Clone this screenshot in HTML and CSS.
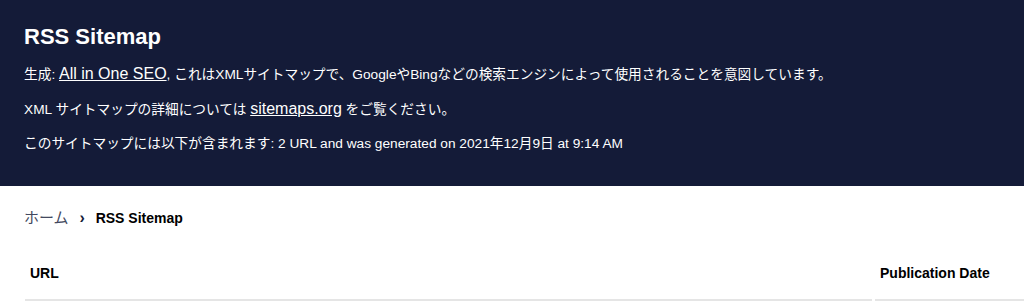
FILE: index.html
```html
<!DOCTYPE html>
<html lang="ja">
  <head>
    <meta charset="UTF-8" />
    <meta name="viewport" content="width=device-width, initial-scale=1.0" />
    <title>RSS Sitemap</title>
    <link rel="stylesheet" href="styles.css">
  </head>
  <body>
    <div id="header">
      <h1 class="title">RSS Sitemap</h1>
      <p class="desc">生成: <a href="#">All in One SEO</a>, これはXMLサイトマップで、GoogleやBingなどの検索エンジンによって使用されることを意図しています。</p>
      <p class="desc">XML サイトマップの詳細については <a href="#">sitemaps.org</a> をご覧ください。</p>
      <p class="desc">このサイトマップには以下が含まれます: 2 URL and was generated on 2021年12月9日 at 9:14 AM</p>
    </div>
    <div id="content">
      <div class="breadcrumb">
        <span class="home">ホーム</span>
        <span class="sep">&#x203A;</span>
        <span class="current">RSS Sitemap</span>
      </div>
      <table class="sitemap">
        <tr>
          <th class="col-url">URL</th>
          <th class="col-date">Publication Date</th>
        </tr>
      </table>
    </div>
  </body>
</html>
```

FILE: styles.css
```css
body {
  margin: 0;
  font-family: "Liberation Sans", Arial, "Noto Sans CJK JP", sans-serif;
  font-size: 14px;
  color: #141b38;
  background: #fff;
  overflow: hidden;
}
#header {
  background-color: #141b38;
  color: #fff;
  padding: 24px 24px 32px;
}
.title {
  margin: 0;
  font-size: 22px;
  line-height: 26px;
  font-weight: bold;
}
.desc {
  margin: 14px 0 0;
  font-size: 13.7px;
  line-height: 20px;
}
.desc a {
  color: #fff;
  font-size: 16px;
  text-decoration: underline;
}
#content {
  padding: 22px 24px 0;
}
.breadcrumb {
  font-size: 14px;
  line-height: 20px;
}
.home {
  color: #434960;
  font-size: 15px;
}
.sep {
  margin: 0 7px;
  font-weight: bold;
  font-size: 16px;
  color: #141b38;
}
.current {
  font-weight: bold;
  color: #000;
}
.sitemap {
  margin: 20px 0 0 -2px;
  width: 1010px;
  border-spacing: 3px 0;
}
.sitemap th {
  text-align: left;
  font-size: 14px;
  line-height: 16px;
  font-weight: bold;
  color: #000;
  padding: 17px 4px 18px 5px;
  border-bottom: 2px solid #e5e5e5;
}
.col-url {
  width: 838px;
}
```
